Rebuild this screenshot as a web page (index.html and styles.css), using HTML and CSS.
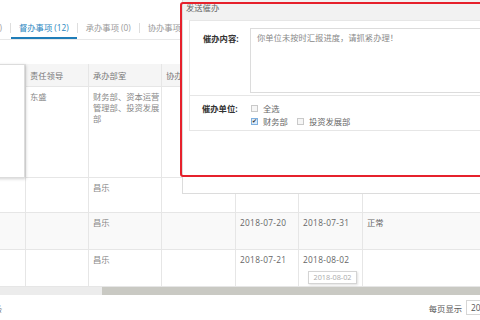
FILE: index.html
```html
<!DOCTYPE html>
<html lang="zh-CN">
<head>
<meta charset="utf-8">
<title>督办事项</title>
<link rel="stylesheet" href="styles.css">
</head>
<body>
<div class="page">
  <div class="tabs">
    <div class="tab tab-clip">待办事项 (0)</div>
    <span class="sep"></span>
    <div class="tab active">督办事项 (12)</div>
    <span class="sep"></span>
    <div class="tab">承办事项 (0)</div>
    <span class="sep"></span>
    <div class="tab">协办事项</div>
  </div>

  <div class="grid">
    <div class="c hd"></div><div class="c hd">责任领导</div><div class="c hd">承办部室</div><div class="c hd">协办部室</div><div class="c hd">开始时间</div><div class="c hd">结束时间</div><div class="c hd">状态</div>

    <div class="c"></div><div class="c">东盛</div><div class="c">财务部、资本运营管理部、投资发展部</div><div class="c"></div><div class="c"></div><div class="c"></div><div class="c"></div>

    <div class="c"></div><div class="c"></div><div class="c">昌乐</div><div class="c"></div><div class="c"></div><div class="c"></div><div class="c"></div>

    <div class="c alt"></div><div class="c alt"></div><div class="c alt">昌乐</div><div class="c alt"></div><div class="c alt num">2018-07-20</div><div class="c alt num">2018-07-31</div><div class="c alt dark">正常</div>

    <div class="c"></div><div class="c"></div><div class="c">昌乐</div><div class="c"></div><div class="c num">2018-07-21</div><div class="c num">2018-08-02</div><div class="c"></div>
  </div>

  <div class="hscroll"><div class="thumb"></div></div>

  <div class="footer">
    <span class="foot-left">条</span>
    <div class="pagesize">
      <span>每页显示</span>
      <span class="sizebox">20</span>
    </div>
  </div>

  <div class="popup"></div>

  <div class="tooltip">2018-08-02</div>

  <div class="dialog">
    <div class="dlg-title">发送催办</div>
    <div class="form">
      <div class="frow frow-content">
        <div class="flabel">催办内容:</div>
        <div class="textarea">你单位未按时汇报进度，请抓紧办理！</div>
      </div>
      <div class="frow frow-units">
        <div class="flabel">催办单位:</div>
        <div class="checks">
          <div class="cline"><span class="cb"></span><span>全选</span></div>
          <div class="cline"><span class="cb on">✔</span><span class="ctext">财务部</span><span class="cb"></span><span>投资发展部</span></div>
        </div>
      </div>
    </div>
  </div>

  <div class="annot"></div>
</div>
</body>
</html>
```

FILE: styles.css
```css
* { box-sizing: border-box; }
html, body { margin: 0; padding: 0; background: #fff; }
body {
  font-family: "Open Sans", "Noto Sans CJK SC", sans-serif;
  font-size: 8.3px;
  color: #777;
}
.page {
  position: relative;
  width: 480px;
  height: 320px;
  overflow: hidden;
  background: #fff;
}

/* tabs */
.tabs {
  display: flex;
  align-items: flex-start;
  height: 40px;
  border-bottom: 1px solid #e8e8e8;
  white-space: nowrap;
}
.tab {
  padding: 22px 8px 3px;
  line-height: 12px;
  border-bottom: 2px solid transparent;
  color: #999;
}
.tab-clip {
  width: 40px;
  margin-left: -30px;
  overflow: hidden;
  direction: rtl;
  text-align: left;
}
.tab.active {
  color: #2a86c0;
  border-bottom-color: #1f7db8;
}
.sep {
  width: 1px;
  height: 10px;
  margin-top: 23px;
  background: #dedede;
  flex: none;
}

/* table */
.grid {
  margin-top: 24px;
  display: grid;
  grid-template-columns: 26px 63px 73px 74px 63px 64px 160px;
  grid-template-rows: 23px 91px 35px 37px 37px;
  width: 523px;
}
.c {
  border-right: 1px solid #e6e6e6;
  border-bottom: 1px solid #e6e6e6;
  padding: 4px 1px 0 4px;
  line-height: 11px;
  color: #888;
  overflow: hidden;
}
.c.hd {
  background: #f5f5f5;
  padding-top: 0;
  display: flex;
  align-items: center;
  color: #777;
  white-space: nowrap;
}
.c.alt { background: #f9f9f9; }
.c.num { color: #666; letter-spacing: 0.3px; }
.c.dark { color: #666; }

/* scrollbar */
.hscroll {
  height: 8px;
  background: #ececec;
  display: flex;
}
.thumb {
  margin-left: 102px;
  flex: 1;
  background: #c9c9c3;
}

/* footer */
.footer {
  height: 25px;
  display: flex;
  justify-content: space-between;
  align-items: center;
  margin-right: -20px;
}
.foot-left {
  margin-left: -6px;
  color: #666;
}
.pagesize {
  display: flex;
  align-items: center;
  gap: 4px;
  color: #555;
}
.sizebox {
  width: 34px;
  height: 15px;
  border: 1px solid #d6d6d6;
  padding-left: 4px;
  line-height: 13px;
  color: #555;
}

/* overlays */
.popup {
  position: absolute;
  left: -5px;
  top: 64px;
  width: 30px;
  height: 114px;
  background: #fff;
  border: 1px solid #dcdcdc;
  box-shadow: 1px 1px 3px rgba(0,0,0,0.18);
}
.tooltip {
  position: absolute;
  left: 308px;
  top: 271px;
  width: 49px;
  height: 13px;
  border: 1px solid #d4d4d4;
  background: #fff;
  box-shadow: 1px 1px 2px rgba(0,0,0,0.12);
  font-size: 7.3px;
  line-height: 11px;
  color: #aaa;
  text-align: center;
}

.dialog {
  position: absolute;
  left: 182px;
  top: -1px;
  width: 320px;
  height: 195px;
  background: #fff;
  border: 1px solid #dcdcdc;
}
.dlg-title {
  height: 20px;
  background: #f2f2f2;
  padding-left: 3px;
  line-height: 16px;
  color: #666;
}
.form {
  margin-left: 6px;
  border: 1px solid #e6e6e6;
}
.frow {
  display: flex;
  align-items: flex-start;
}
.frow-content {
  padding: 7px 0 2px 13px;
  border-bottom: 1px solid #e6e6e6;
}
.flabel {
  color: #333;
  font-weight: bold;
  flex: none;
}
.frow-content .flabel {
  width: 47px;
  padding-top: 5px;
  line-height: 11px;
}
.textarea {
  flex: 1;
  height: 65px;
  border: 1px solid #dcdcdc;
  padding: 3px 6px;
  line-height: 11px;
  color: #888;
}
.frow-units {
  padding: 6px 0 2px 12px;
  line-height: 13px;
}
.frow-units .flabel { width: 49px; }
.cline {
  display: flex;
  align-items: center;
  height: 13px;
  color: #666;
}
.cb {
  width: 7px;
  height: 7px;
  border: 1px solid #c9c9c9;
  background: #f6f6f6;
  margin-right: 5px;
  flex: none;
  font-size: 6px;
  line-height: 5px;
  text-align: center;
  color: #333;
  overflow: hidden;
}
.cb.on {
  border-color: #7fb0e0;
  background: #dcebf9;
}
.ctext { margin-right: 9px; }

.annot {
  position: absolute;
  left: 180px;
  top: 2px;
  width: 320px;
  height: 175px;
  border: 2px solid #e6212c;
  border-radius: 3px;
}
```
